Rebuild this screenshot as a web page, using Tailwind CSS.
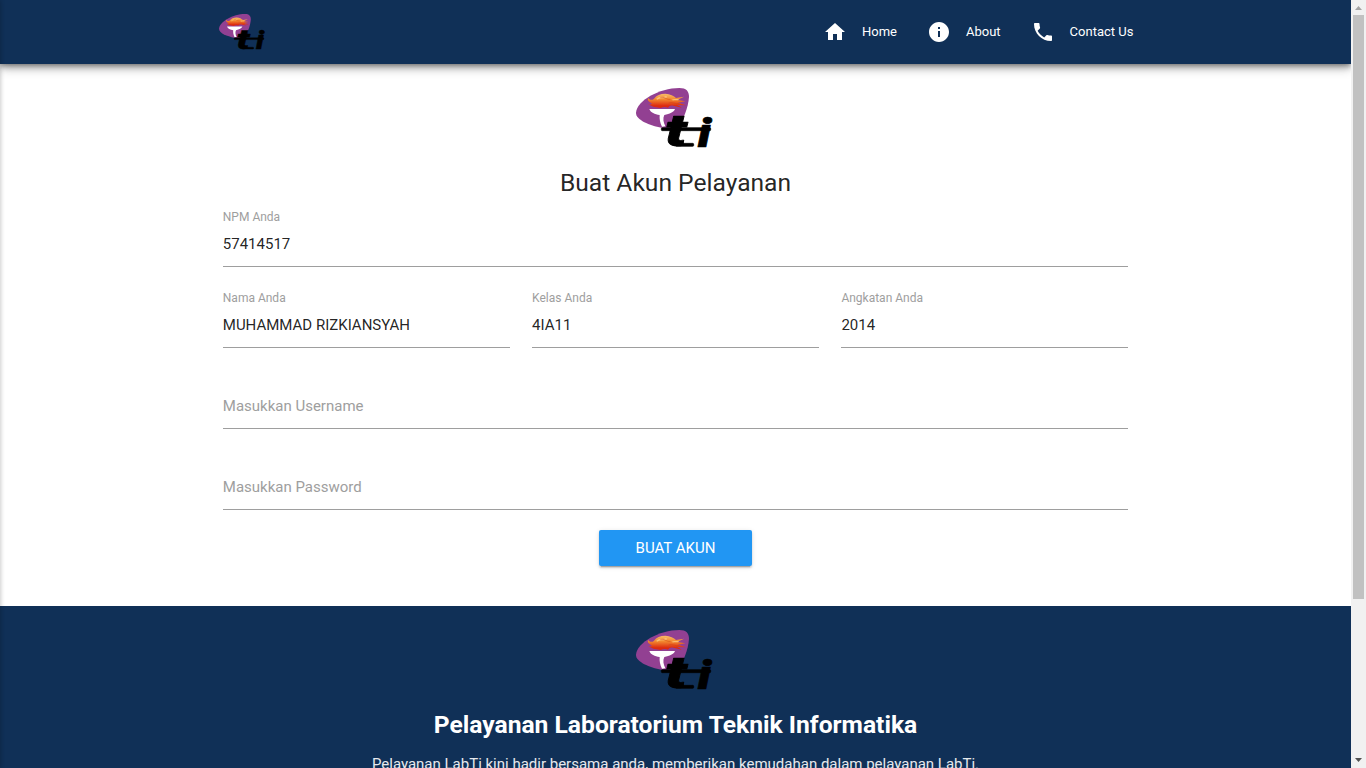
<!DOCTYPE html>
<html lang="id">
<head>
<meta charset="utf-8">
<title>Buat Akun Pelayanan</title>
<script src="https://cdn.jsdelivr.net/npm/@tailwindcss/browser@4"></script>
</head>
<body class="flex h-[768px] w-[1366px] overflow-hidden bg-white font-['Roboto',sans-serif] text-[15px] text-black/87">
<svg class="absolute size-0">
  <defs>
    <linearGradient id="flame" x1="0" y1="0" x2="0" y2="1">
      <stop offset="0" stop-color="#f9bd68"/><stop offset=".4" stop-color="#f2882f"/><stop offset=".85" stop-color="#dc2a10"/>
    </linearGradient>
    <symbol id="logo" viewBox="0 0 300 228">
      <path fill="#924092" d="M30 98C32 62 100 24 160 24C181 24 189 34 189 51C187 83 171 119 158 144L106 143C72 136 29 120 30 98Z"/>
      <path fill="url(#flame)" d="M66 53C70 60 78 62 84 56C91 46 103 41 118 41C132 42 144 47 150 54L174 50L154 60L178 64L156 68L180 76L154 75L168 83L142 77C132 75 129 79 126 83C118 79 110 81 104 84L82 80L67 73C78 74 80 71 74 68C67 65 64 59 66 53Z"/>
      <path d="M92 58C103 47 112 57 122 50M139 60C145 57 151 61 158 58" fill="none" stroke="#ffe2a0" stroke-opacity=".6" stroke-width="4"/>
      <path d="M103 53C115 48 120 60 134 58M128 69C140 65 148 73 160 71" fill="none" stroke="#cf3d14" stroke-opacity=".5" stroke-width="3"/>
      <path fill="#fff" d="M70 87H147C143 97 131 102 115 105C110 115 112 127 118 139L108 140C102 128 100 117 101 105C86 103 74 98 70 87Z"/>
      <g fill="#000" stroke="#000" stroke-width="2" stroke-linejoin="round" font-family="Roboto" font-weight="900" font-style="italic">
        <rect x="106" y="143" width="148" height="9" rx="3"/>
        <rect x="148" y="190" width="55" height="9" rx="3"/>
        <text transform="translate(117 199) scale(1.45 1)" font-size="134">t</text>
        <text transform="translate(215 200) scale(1.2 1)" font-size="124">i</text>
      </g>
    </symbol>
  </defs>
</svg>
<div class="relative flex h-full w-[1351px] flex-col overflow-hidden">
  <header class="z-10 flex h-16 shrink-0 items-center justify-between bg-[#103057] pr-[217.6px] pl-[213px] text-[13px] text-white shadow-[0_4px_5px_0_rgba(0,0,0,0.14),0_1px_10px_0_rgba(0,0,0,0.12),0_2px_4px_-1px_rgba(0,0,0,0.3),0_5px_10px_rgba(0,0,0,0.2)]">
    <svg class="h-[46px] w-[60px]"><use href="#logo"/></svg>
    <nav class="flex items-center">
      <a class="flex items-center gap-[15px]"><svg class="size-6" viewBox="0 0 24 24" fill="currentColor"><path d="M10 20v-6h4v6h5v-8h3L12 3 2 12h3v8z"/></svg>Home</a>
      <a class="ml-[30px] flex items-center gap-[15px]"><svg class="size-6" viewBox="0 0 24 24" fill="currentColor"><path d="M12 2C6.480 2 2 6.480 2 12s4.480 10 10 10 10-4.480 10-10S17.520 2 12 2zm1 15h-2v-6h2v6zm0-8h-2V7h2v2z"/></svg>About</a>
      <a class="ml-[30px] flex items-center gap-[15px]"><svg class="size-6" viewBox="0 0 24 24" fill="currentColor"><path d="M6.620 10.790c1.440 2.830 3.760 5.140 6.590 6.590l2.200-2.200c.27-.27.67-.36 1.020-.24 1.120.37 2.330.57 3.570.57.55 0 1 .45 1 1V20c0 .55-.45 1-1 1-9.390 0-17-7.610-17-17 0-.55.45-1 1-1h3.500c.55 0 1 .45 1 1 0 1.250.2 2.450.57 3.570.11.35.03.74-.25 1.020l-2.200 2.200z"/></svg>Contact Us</a>
    </nav>
  </header>
  <main class="flex h-[542px] shrink-0 flex-col items-center pt-4">
    <svg class="h-[76px] w-[100px] shrink-0"><use href="#logo"/></svg>
    <h1 class="mt-3 h-[30px] text-[24.6px] leading-[30px]">Buat Akun Pelayanan</h1>
    <form class="mt-3 flex w-[905.4px] flex-col">
      <div class="flex h-[57px] flex-col border-b border-[#9e9e9e]">
        <label class="text-xs leading-[14px] text-[#9e9e9e]">NPM Anda</label>
        <div class="mt-[10px] leading-5">57414517</div>
      </div>
      <div class="mt-6 grid grid-cols-3 gap-[22.5px]">
        <div class="flex h-[57px] flex-col border-b border-[#9e9e9e]">
          <label class="text-xs leading-[14px] text-[#9e9e9e]">Nama Anda</label>
          <div class="mt-[10px] leading-5">MUHAMMAD RIZKIANSYAH</div>
        </div>
        <div class="flex h-[57px] flex-col border-b border-[#9e9e9e]">
          <label class="text-xs leading-[14px] text-[#9e9e9e]">Kelas Anda</label>
          <div class="mt-[10px] leading-5">4IA11</div>
        </div>
        <div class="flex h-[57px] flex-col border-b border-[#9e9e9e]">
          <label class="text-xs leading-[14px] text-[#9e9e9e]">Angkatan Anda</label>
          <div class="mt-[10px] leading-5">2014</div>
        </div>
      </div>
      <div class="mt-6 h-[57px] border-b border-[#9e9e9e] pt-6 leading-5 text-[#9e9e9e]">Masukkan Username</div>
      <div class="mt-6 h-[57px] border-b border-[#9e9e9e] pt-6 leading-5 text-[#9e9e9e]">Masukkan Password</div>
      <button type="button" class="mt-5 h-9 w-[153px] self-center rounded-[2px] bg-[#2196f3] leading-9 text-white shadow-[0_2px_2px_0_rgba(0,0,0,0.14),0_1px_5px_0_rgba(0,0,0,0.12),0_3px_1px_-2px_rgba(0,0,0,0.2)]">BUAT AKUN</button>
    </form>
  </main>
  <footer class="flex h-[162px] shrink-0 flex-col items-center overflow-hidden bg-[#103057] pt-4 text-white">
    <svg class="h-[76px] w-[100px] shrink-0"><use href="#logo"/></svg>
    <h2 class="mt-3 h-[30px] shrink-0 text-[24.64px] leading-[30px] font-bold">Pelayanan Laboratorium Teknik Informatika</h2>
    <p class="mt-[14px] shrink-0 leading-5 text-[#e6e9ed]">Pelayanan LabTi kini hadir bersama anda, memberikan kemudahan dalam pelayanan LabTi.</p>
  </footer>
  <div class="absolute top-0 -left-1 z-20 h-full w-1 shadow-[0_0_5px_rgba(0,0,0,0.3)]"></div>
</div>
<div class="flex w-[15px] flex-col items-center bg-[#f1f1f1]">
  <svg class="h-[15px] w-[15px] shrink-0" viewBox="0 0 15 15"><path fill="#a3a3a3" d="M4 10h7L7.500 6z"/></svg>
  <div class="h-[584px] w-[11px] bg-[#c1c1c1]"></div>
  <svg class="mt-auto h-[15px] w-[15px] shrink-0" viewBox="0 0 15 15"><path fill="#505050" d="M4 5h7L7.500 9z"/></svg>
</div>
</body>
</html>
